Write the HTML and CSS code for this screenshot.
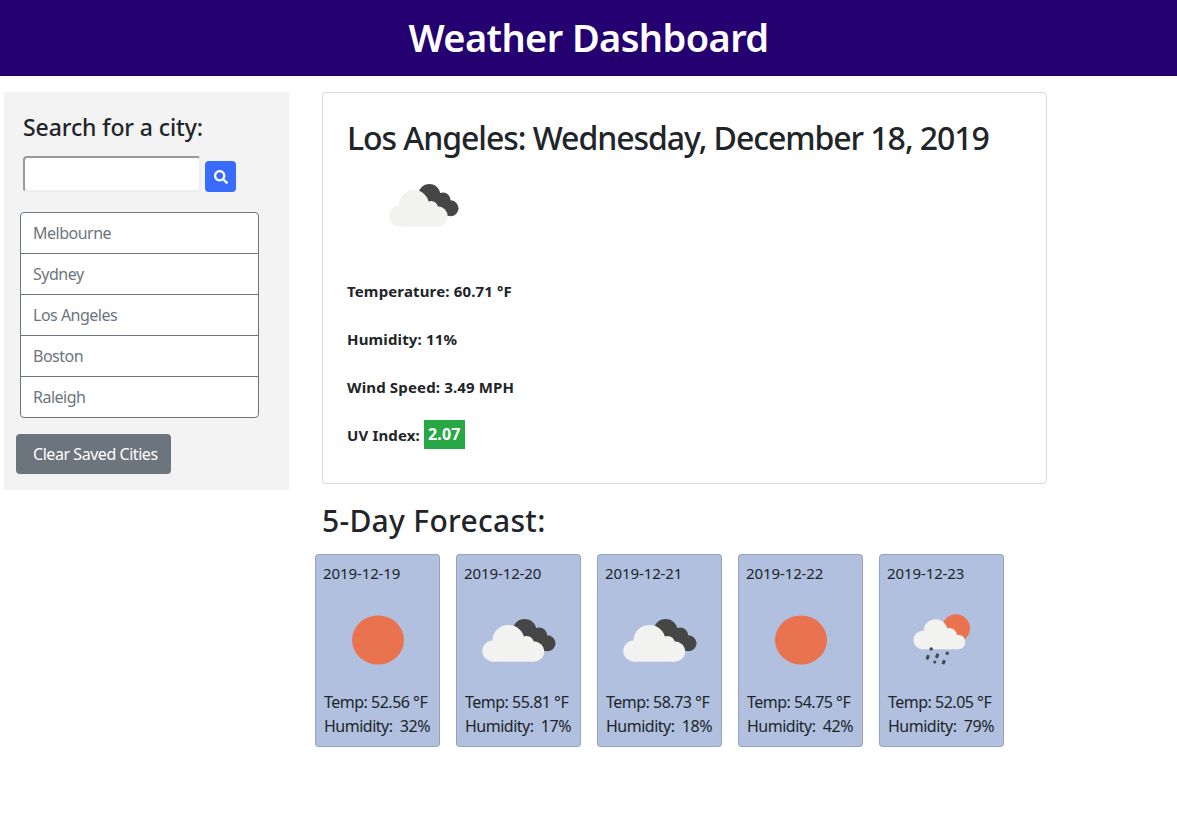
FILE: index.html
```html
<!DOCTYPE html>
<html lang="en">

<head>
    <meta charset="UTF-8">
    <title>Weather Dashboard</title>
    <link rel="stylesheet" href="styles.css">
</head>

<body>
    <svg class="defs" width="0" height="0">
        <symbol id="clouds" viewBox="0 0 100 100" preserveAspectRatio="none">
            <g fill="#464646">
                <circle cx="55.3" cy="40" r="11" />
                <circle cx="69" cy="45" r="7.5" />
                <circle cx="76.5" cy="53.3" r="8" />
                <path d="M50 38h20l4 23-14 2z" />
            </g>
            <g fill="#f2f2f1">
                <circle cx="26" cy="61" r="10.7" />
                <circle cx="40" cy="50" r="15" />
                <circle cx="57" cy="53" r="7" />
                <circle cx="63.5" cy="61.5" r="10.2" />
                <rect x="26" y="55" width="37.5" height="16.7" />
            </g>
        </symbol>
        <symbol id="sun" viewBox="0 0 100 100" preserveAspectRatio="none">
            <circle cx="50" cy="50" r="24.5" fill="#ea734f" />
        </symbol>
        <symbol id="rain" viewBox="0 0 106 100" preserveAspectRatio="none">
            <circle cx="67" cy="38.3" r="14" fill="#ea734f" />
            <g fill="#f2f2f1">
                <circle cx="33.8" cy="50" r="9.3" />
                <circle cx="46.5" cy="41.3" r="12" />
                <circle cx="60" cy="46" r="8" />
                <circle cx="69" cy="52" r="7.3" />
                <rect x="33" y="45" width="36" height="14.3" />
            </g>
            <g fill="#444b52">
                <circle cx="42.2" cy="59" r="1.8" />
                <circle cx="58.2" cy="63.3" r="1.7" />
                <rect x="37.2" y="65" width="3.2" height="4.6" rx="1" transform="rotate(20 38.8 67)" />
                <rect x="46.6" y="63.5" width="3.2" height="4.6" rx="1" transform="rotate(20 48.2 65.7)" />
                <circle cx="45.8" cy="72" r="1.6" />
                <rect x="53.2" y="70" width="3.2" height="4.4" rx="1" transform="rotate(20 54.8 72)" />
            </g>
        </symbol>
    </svg>

    <header class="top-bar">
        <h1>Weather Dashboard</h1>
    </header>

    <div class="page">
        <aside class="sidebar">
            <h5 class="search-title">Search for a city:</h5>
            <form class="search-form">
                <input type="text" class="search-input">
                <button type="button" class="search-btn" aria-label="Search">
                    <svg viewBox="0 0 512 512" width="14" height="14">
                        <path fill="#fff"
                            d="M505 442.7L405.3 343c-4.5-4.5-10.6-7-17-7H372c27.6-35.3 44-79.7 44-128C416 93.1 322.9 0 208 0S0 93.1 0 208s93.1 208 208 208c48.3 0 92.7-16.4 128-44v16.3c0 6.4 2.5 12.5 7 17l99.7 99.7c9.4 9.4 24.6 9.4 33.9 0l28.3-28.3c9.4-9.4 9.4-24.6.1-34zM208 336c-70.7 0-128-57.2-128-128 0-70.7 57.2-128 128-128 70.7 0 128 57.2 128 128 0 70.7-57.2 128-128 128z" />
                    </svg>
                </button>
            </form>
            <ul class="city-list">
                <li>Melbourne</li>
                <li>Sydney</li>
                <li>Los Angeles</li>
                <li>Boston</li>
                <li>Raleigh</li>
            </ul>
            <button type="button" class="clear-btn">Clear Saved Cities</button>
        </aside>

        <main class="content">
            <section class="today">
                <h2>Los Angeles: Wednesday, December 18, 2019</h2>
                <svg class="today-icon"><use href="#clouds" /></svg>
                <p>Temperature: 60.71 °F</p>
                <p>Humidity: 11%</p>
                <p>Wind Speed: 3.49 MPH</p>
                <p class="uv-line">UV Index: <span class="uv">2.07</span></p>
            </section>

            <h3 class="forecast-title">5-Day Forecast:</h3>
            <div class="forecast">
                <div class="day">
                    <div class="day-date">2019-12-19</div>
                    <svg class="day-icon"><use href="#sun" /></svg>
                    <div class="day-line">Temp: 52.56 °F</div>
                    <div class="day-line">Humidity:&nbsp; 32%</div>
                </div>
                <div class="day">
                    <div class="day-date">2019-12-20</div>
                    <svg class="day-icon"><use href="#clouds" /></svg>
                    <div class="day-line">Temp: 55.81 °F</div>
                    <div class="day-line">Humidity:&nbsp; 17%</div>
                </div>
                <div class="day">
                    <div class="day-date">2019-12-21</div>
                    <svg class="day-icon"><use href="#clouds" /></svg>
                    <div class="day-line">Temp: 58.73 °F</div>
                    <div class="day-line">Humidity:&nbsp; 18%</div>
                </div>
                <div class="day">
                    <div class="day-date">2019-12-22</div>
                    <svg class="day-icon"><use href="#sun" /></svg>
                    <div class="day-line">Temp: 54.75 °F</div>
                    <div class="day-line">Humidity:&nbsp; 42%</div>
                </div>
                <div class="day">
                    <div class="day-date">2019-12-23</div>
                    <svg class="day-icon"><use href="#rain" /></svg>
                    <div class="day-line">Temp: 52.05 °F</div>
                    <div class="day-line">Humidity:&nbsp; 79%</div>
                </div>
            </div>
        </main>
    </div>
</body>

</html>
```

FILE: styles.css
```css
* {
    box-sizing: border-box;
}

body {
    margin: 0;
    background-color: #fff;
    color: #212529;
    font-family: "Noto Sans", "Open Sans", sans-serif;
    font-size: 16px;
    letter-spacing: -0.5px;
}

.defs {
    position: absolute;
}

.top-bar {
    height: 76px;
    background-color: #240070;
    display: flex;
    align-items: center;
    justify-content: center;
}

.top-bar h1 {
    margin: 0 0 2px;
    color: #fff;
    font-size: 38px;
    font-weight: 600;
    letter-spacing: -0.6px;
}

.page {
    display: flex;
    align-items: flex-start;
    padding: 16px 0 0 4px;
}

.sidebar {
    width: 285px;
    padding: 16px 12px;
    background-color: #f3f3f3;
    display: flex;
    flex-direction: column;
    align-items: flex-start;
}

.search-title {
    margin: 4px 0 0 7px;
    font-size: 23px;
    font-weight: 500;
    line-height: 30px;
    letter-spacing: -0.1px;
}

.search-form {
    margin: 14px 0 0 7px;
    display: flex;
    align-items: flex-end;
    gap: 4px;
}

.search-input {
    width: 178px;
    height: 36px;
    padding: 1px 2px;
    border-style: solid;
    border-width: 2px;
    border-color: #999 #eee #eee #999;
    border-radius: 4px;
    background-color: #fff;
}

.search-btn {
    width: 31px;
    height: 31px;
    padding: 0;
    border: 0;
    border-radius: 4px;
    background-color: #3a6bff;
    display: flex;
    align-items: center;
    justify-content: center;
}

.city-list {
    width: 239px;
    margin: 20px 0 0 4px;
    padding: 0;
    list-style: none;
    background-color: #fff;
    border: 1px solid #6c757d;
    border-radius: 4px;
}

.city-list li {
    height: 41px;
    padding: 0 12px;
    color: #6c757d;
    line-height: 40px;
    border-bottom: 1px solid #6c757d;
}

.city-list li:last-child {
    height: 40px;
    border-bottom: 0;
}

.clear-btn {
    width: 155px;
    height: 40px;
    margin-top: 16px;
    padding: 0 0 0 17px;
    border: 0;
    border-radius: 4px;
    background-color: #6c757d;
    color: #fff;
    font-family: inherit;
    font-size: 16px;
    letter-spacing: -0.45px;
    text-align: left;
}

.content {
    width: 725px;
    margin-left: 33px;
}

.today {
    height: 392px;
    padding: 24px;
    border: 1px solid rgba(0, 0, 0, 0.15);
    border-radius: 4px;
}

.today h2 {
    margin: 0;
    font-size: 32px;
    font-weight: 500;
    line-height: 42px;
    letter-spacing: -1.05px;
}

.today-icon {
    display: block;
    width: 100px;
    height: 100px;
    margin: -4px 0 24px 27px;
}

.today p {
    margin: 0 0 24px;
    font-size: 15px;
    font-weight: 700;
    line-height: 24px;
    letter-spacing: 0.15px;
}

.today .uv-line {
    margin-top: -3px;
}

.uv {
    display: inline-block;
    padding: 0 4px;
    background-color: #28a745;
    color: #fff;
    font-size: 16px;
    line-height: 29px;
    vertical-align: 1px;
}

.forecast-title {
    margin: 17px 0 0;
    font-size: 30px;
    font-weight: 500;
    line-height: 40px;
    letter-spacing: 0.3px;
}

.forecast {
    display: flex;
    gap: 16px;
    margin: 13px 0 0 -7px;
}

.day {
    width: 125px;
    height: 193px;
    padding: 6px 7px;
    background-color: #b0c0de;
    border: 1px solid rgba(0, 0, 0, 0.15);
    border-radius: 4px;
}

.day-date {
    line-height: 24px;
    font-size: 15px;
    letter-spacing: -0.1px;
}

.day-icon {
    display: block;
    width: 106px;
    height: 100px;
    margin: 5px 0 0 2px;
}

.day-line {
    padding-left: 1px;
    font-size: 16px;
    line-height: 24px;
    letter-spacing: -0.5px;
    white-space: nowrap;
}
```
